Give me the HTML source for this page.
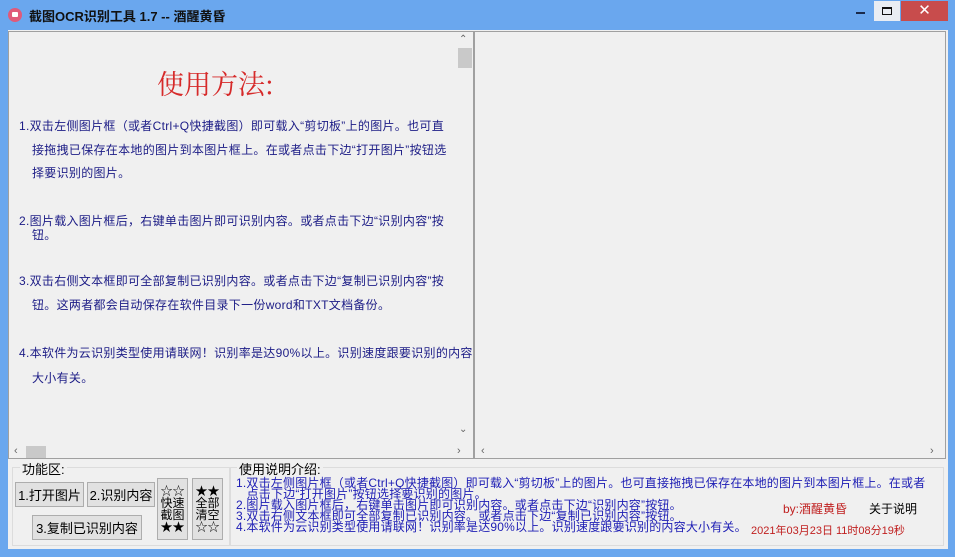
<!DOCTYPE html><html><head><meta charset="utf-8"><style>
*{margin:0;padding:0;box-sizing:border-box}
body{width:955px;height:557px;background:#6aa7ee;position:relative;overflow:hidden;font-family:"Liberation Sans","Noto Sans CJK SC",sans-serif;font-size:12px}
.a{position:absolute;white-space:nowrap}
.t{color:#1c1c86;font-size:12px;line-height:14px;letter-spacing:0.3px}
.btn{position:absolute;background:#e1e1e1;border:1px solid #adadad;font-size:13px;display:flex;align-items:center;justify-content:center;color:#000}
</style></head><body>
<div class="a" style="left:8px;top:8px;width:14px;height:14px;border-radius:50%;background:#e05a7a"></div>
<div class="a" style="left:12px;top:12px;width:6px;height:5px;background:#fff;border-radius:1px"></div>
<div class="a" style="left:29px;top:6px;font-size:13px;font-weight:bold;color:#111">截图OCR识别工具 1.7 -- 酒醒黄昏</div>
<div class="a" style="left:856px;top:12px;width:9px;height:2px;background:#1a2a4a"></div>
<div class="a" style="left:874px;top:1px;width:26px;height:20px;background:#e9edf3"></div>
<div class="a" style="left:882px;top:7px;width:10px;height:8px;border:1px solid #111;border-top-width:2px"></div>
<div class="a" style="left:901px;top:1px;width:47px;height:20px;background:#c84c4c;color:#fff;font-size:15px;text-align:center;line-height:20px">✕</div>
<div class="a" style="left:8px;top:30px;width:940px;height:519px;background:#f0f0f0"></div>
<div class="a" style="left:8px;top:31px;width:466px;height:428px;background:#f0f0f0;border:1px solid #a0a0a0"></div>
<div class="a" style="left:459px;top:34px;color:#666;font-size:10px">⌃</div>
<div class="a" style="left:458px;top:48px;width:14px;height:20px;background:#c9c9c9"></div>
<div class="a" style="left:459px;top:424px;color:#666;font-size:10px">⌄</div>
<div class="a" style="left:14px;top:445px;color:#666;font-size:11px">‹</div>
<div class="a" style="left:26px;top:446px;width:20px;height:12px;background:#c9c9c9"></div>
<div class="a" style="left:457px;top:445px;color:#666;font-size:11px">›</div>
<div class="a" style="left:157px;top:63px;font-size:27px;color:#d62a2a;font-family:'Noto Serif CJK SC',serif">使用方法:</div>
<div class="a t" style="left:19px;top:119px">1.双击左侧图片框（或者Ctrl+Q快捷截图）即可载入“剪切板”上的图片。也可直</div>
<div class="a t" style="left:32px;top:143px">接拖拽已保存在本地的图片到本图片框上。在或者点击下边“打开图片”按钮选</div>
<div class="a t" style="left:32px;top:166px">择要识别的图片。</div>
<div class="a t" style="left:19px;top:214px">2.图片载入图片框后，右键单击图片即可识别内容。或者点击下边“识别内容”按</div>
<div class="a t" style="left:32px;top:228px">钮。</div>
<div class="a t" style="left:19px;top:274px">3.双击右侧文本框即可全部复制已识别内容。或者点击下边“复制已识别内容”按</div>
<div class="a t" style="left:32px;top:298px">钮。这两者都会自动保存在软件目录下一份word和TXT文档备份。</div>
<div class="a t" style="left:19px;top:346px">4.本软件为云识别类型使用请联网！识别率是达90%以上。识别速度跟要识别的内容</div>
<div class="a t" style="left:32px;top:371px">大小有关。</div>
<div class="a" style="left:474px;top:31px;width:472px;height:428px;background:#f0f0f0;border:1px solid #a0a0a0"></div>
<div class="a" style="left:481px;top:445px;color:#666;font-size:11px">‹</div>
<div class="a" style="left:930px;top:445px;color:#666;font-size:11px">›</div>
<div class="a" style="left:12px;top:467px;width:218px;height:79px;border:1px solid #dcdcdc"></div>
<div class="a" style="left:20px;top:459px;background:#f0f0f0;padding:0 2px;font-size:13px">功能区:</div>
<div class="a" style="left:230px;top:467px;width:714px;height:79px;border:1px solid #dcdcdc"></div>
<div class="a" style="left:237px;top:459px;background:#f0f0f0;padding:0 2px;font-size:13px">使用说明介绍:</div>
<div class="btn" style="left:15px;top:482px;width:69px;height:25px">1.打开图片</div>
<div class="btn" style="left:87px;top:482px;width:68px;height:25px">2.识别内容</div>
<div class="btn" style="left:32px;top:515px;width:110px;height:25px">3.复制已识别内容</div>
<div class="btn" style="left:157px;top:478px;width:31px;height:62px;font-size:12px;line-height:12px;text-align:center;flex-direction:column">☆☆<br>快速<br>截图<br>★★</div>
<div class="btn" style="left:192px;top:478px;width:31px;height:62px;font-size:12px;line-height:12px;text-align:center;flex-direction:column">★★<br>全部<br>清空<br>☆☆</div>
<div class="a" style="left:236px;top:478px;color:#1c1cb4;font-size:12px;line-height:11px;letter-spacing:0.2px">1.双击左侧图片框（或者Ctrl+Q快捷截图）即可载入“剪切板”上的图片。也可直接拖拽已保存在本地的图片到本图片框上。在或者<br>&nbsp;&nbsp;&nbsp;点击下边“打开图片”按钮选择要识别的图片。<br>2.图片载入图片框后，右键单击图片即可识别内容。或者点击下边“识别内容”按钮。<br>3.双击右侧文本框即可全部复制已识别内容。或者点击下边“复制已识别内容”按钮。<br>4.本软件为云识别类型使用请联网！识别率是达90%以上。识别速度跟要识别的内容大小有关。</div>
<div class="a" style="left:783px;top:500px;color:#c02020;font-size:12px">by:酒醒黄昏</div>
<div class="a" style="left:869px;top:500px;color:#000;font-size:12px">关于说明</div>
<div class="a" style="left:751px;top:522px;color:#c02020;font-size:11px">2021年03月23日 11时08分19秒</div>
</body></html>
